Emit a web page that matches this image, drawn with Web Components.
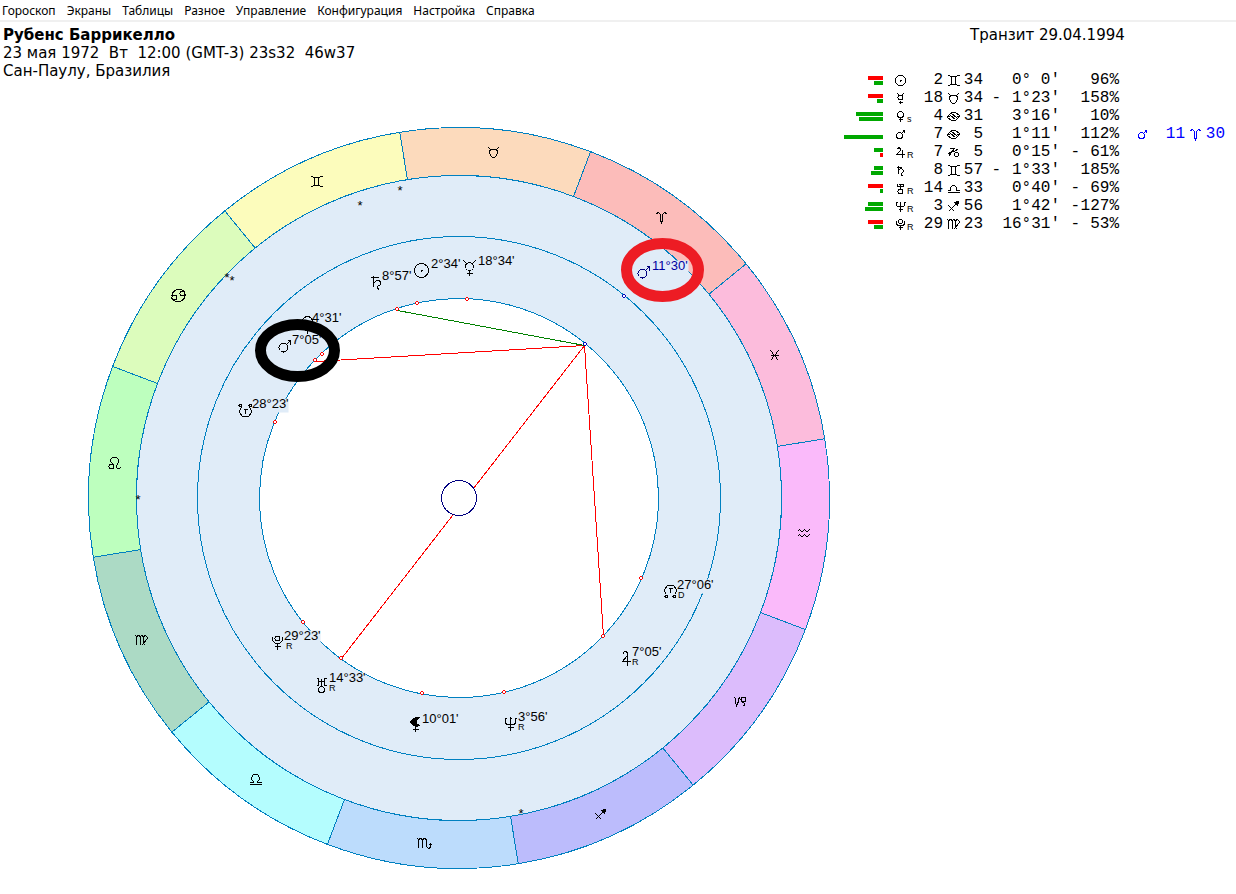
<!DOCTYPE html>
<html lang="ru">
<head>
<meta charset="utf-8">
<title>Рубенс Баррикелло — транзит</title>
<style>
  html, body { margin: 0; background: #fff; color: #000; }
</style>
</head>
<body>
<astro-app>
  <astro-menu slot="menu"></astro-menu>
  <chart-info slot="info">
    <span slot="name">Рубенс Баррикелло</span>
    <span slot="date">23 мая 1972  Вт  12:00 (GMT-3) 23s32  46w37</span>
    <span slot="place">Сан-Паулу, Бразилия</span>
  </chart-info>
  <zodiac-wheel slot="wheel"></zodiac-wheel>
  <span slot="title">Транзит 29.04.1994</span>
  <planet-table slot="table"></planet-table>
</astro-app>

<script>
const GLYPHS = {
  aries: '<path d="M-5-3L-4-5H-3L-1-3V3L0 5L1 3V-3L3-5H4L5-3"/>',
  taurus: '<path d="M-5-5L-3-3H3L5-5M-3-3L-4-1V1L-2 4L-1 5H1L2 4L4 1V-1L3-3"/>',
  gemini: '<path d="M-6-5H-4L-3-4H3L4-5H6M-6 5H-4L-3 4H3L4 5H6M-2-4V4M2-4V4"/>',
  cancer: '<circle cx="-4" cy="2" r="2.5"/><circle cx="4" cy="-2" r="2.5"/><path d="M-7 1Q-6-6 1-6Q5-6 7-3M7-1Q6 6-1 6Q-5 6-7 3"/>',
  cancerAlt: '<path d="M-6 0L-2-4H2L6-1V0L2 4H-2L-6 1ZM-6 1L-3-1L2 3M-2-3L3 1L6-1"/>',
  leo: '<circle cx="-3" cy="3" r="2.5"/><path d="M-1 1L-4-2V-4L-2-6H2L4-4V-1L2 2V4L3 5H5L6 4"/>',
  virgo: '<path d="M-7-4L-6-5L-5-4V4M-5-4L-3-5L-1-4V4M-1-4L0-5L2-4V3L4 5M2-4L4-5L6-3V-2L0 5"/>',
  libra: '<path d="M-6 3H-2V2L-4 0V-2L-2-5H2L4-2V0L2 2V3H6M-6 5H6"/>',
  libraAlt: '<path d="M-6 2H-3V-1L-1-3H1L3-1V2H6M-6 4H6"/>',
  scorpio: '<path d="M-7-5L-6-4V4M-6-4L-4-5L-2-4V4M-2-4L0-5L2-4V3L4 5H5L6 3V0M4 2L6 0L8 2"/>',
  sagittarius: '<path d="M-5 5L4-4M-5-1L1 5"/><path class="solid" d="M5-5L1-4L4-1Z"/>',
  capricorn: '<path d="M-6-4H-5L-4-3V1L-3 4L-1 0V-3L1-4"/><circle cx="4" cy="-2" r="2.5"/><path d="M2-4V0L5 2V4H3"/>',
  capricornAlt: '<path d="M-4-4H1L-5 4M-5 1L-1-1H1L5-4"/><circle cx="3" cy="2" r="2"/>',
  aquarius: '<path d="M-6-2L-4-4L-2-2H-1L1-4L3-2H4L6-4M-6 3L-4 1L-2 3H-1L1 1L3 3H4L6 1"/>',
  pisces: '<path d="M-4-5L-2-3L-1 0L-2 3L-4 5M4-5L2-3L1 0L2 3L4 5M-4 0H4"/>',

  sun: '<circle r="7"/><path class="solid" d="M0-1V1M-1 0H1"/>',
  mercury: '<circle cy="-1" r="4"/><path d="M-6-7L-3-4M6-7L3-4M0 3V8M-3 6H3"/>',
  venus: '<circle cy="-1" r="5"/><path d="M0 4V11M-3 8H3"/>',
  mars: '<circle cx="-1" cy="1" r="4.5"/><path d="M2-2L6-6M3-6H6V-2"/>',
  jupiter: '<path d="M-4-4L-2-7H0L1-5V-3L-4 3H4M1-3V7"/>',
  saturn: '<path d="M-3-7V4M-6-5H2M-3 1L0-2H3L4 0V2L1 4V6L3 7"/>',
  uranus: '<path d="M-5-7H-3V0H-5M5-7H3V0H5M0-7V1M-3-4H3"/><circle cy="4" r="3"/>',
  neptune: '<path d="M-5-6V-1L-4 1H4L5-1V-6M-6-5H-4M4-5H6M0-7V7M-1-5H1M-3 4H3"/>',
  pluto: '<circle cy="-4" r="2.5"/><path d="M-5-6V-2L-2 1H2L5-2V-6M0 1V7M-3 4H3"/>',
  lilith: '<path class="solid" d="M4-6H0L-4-3L-5-1L0 3L4 2L1 0V-3Z"/><path d="M0 3V8M-3 6H3"/>',
  southNode: '<path d="M-4-3L-6 0V2L-3 6H3L6 2V0L4-3M-2-1H2M0-1V3"/><circle cx="-5" cy="-5" r="1.5"/><circle cx="5" cy="-5" r="1.5"/>',
  northNode: '<path d="M-4 3L-6 0V-2L-3-6H3L6-2V0L4 3M-2-3H2M0-3V1"/><circle cx="-4" cy="5" r="1.5"/><circle cx="4" cy="5" r="1.5"/>',

  sunSmall: '<path d="M-2-5H2L5-2V2L2 5H-2L-5 2V-2ZM0-1V1M-1 0H1"/>',
  mercurySmall: '<circle cy="-1" r="2.5"/><path d="M-3-5L-1-3M3-5L1-3M0 2V5M-2 4H2"/>',
  venusSmall: '<circle cy="-2" r="3"/><path d="M0 1V5M-2 3H2"/>',
  marsSmall: '<circle cx="-1" cy="1" r="3"/><path d="M1-1L4-4M2-4H4V-2"/>',
  jupiterSmall: '<path d="M-3-3L-2-5H-1L0-3V-2L-4 2H4M2-3V5"/>',
  saturnSmall: '<path d="M-2-5V3M-4-3H1M-2 0L0-2H1L3 0V1L1 3V5L2 5"/>',
  uranusSmall: '<path d="M-3-5V-2H3V-5M0-5V0M-2-4H2"/><circle cy="3" r="2.5"/>',
  neptuneSmall: '<path d="M-4-4V-1L-3 0H3L4-1V-4M0-5V5M-5-4H-3M3-4H5M-2 3H2"/>',
  plutoSmall: '<circle cy="-3" r="2"/><path d="M-4-4V-1L-3 1H3L4-1V-4M0 1V5M-2 3H2"/>'
};
const GLYPH_CSS = `
  .glyph { fill: none; stroke: currentColor; stroke-width: 1; shape-rendering: crispEdges; }
  .glyph .solid { fill: currentColor; }`;

class AstroApp extends HTMLElement {
  constructor() {
    super();
    this.attachShadow({ mode: 'open' }).innerHTML = `
      <style>
        :host { display: block; }
        main { display: grid; grid-template-columns: minmax(0, 1fr) 392px; padding-top: 4px;
               font: 15px/18px "DejaVu Sans", Verdana, sans-serif; }
        h2 { margin: 0 0 27px 126px; font: inherit; white-space: nowrap; }
      </style>
      <slot name="menu"></slot>
      <main>
        <section><slot name="info"></slot><slot name="wheel"></slot></section>
        <aside><h2><slot name="title"></slot></h2><slot name="table"></slot></aside>
      </main>`;
  }
}

class AstroMenu extends HTMLElement {
  constructor() {
    super();
    const items = ['Гороскоп', 'Экраны', 'Таблицы', 'Разное', 'Управление', 'Конфигурация', 'Настройка', 'Справка'];
    this.attachShadow({ mode: 'open' }).innerHTML = `
      <style>
        :host { display: block; border-bottom: 2px solid #f0f0f0; }
        nav { display: flex; gap: 11px; padding: 2px 2px 0; }
        button { border: 0; padding: 0; margin: 0; background: none; color: #000; white-space: nowrap;
                 font: 12px/18px "Noto Sans", "Segoe UI", sans-serif; }
      </style>
      <nav>${items.map(t => `<button type="button">${t}</button>`).join('')}</nav>`;
  }
}

class ChartInfo extends HTMLElement {
  constructor() {
    super();
    this.attachShadow({ mode: 'open' }).innerHTML = `
      <style>
        :host { display: block; padding-left: 3px; }
        h1, p { margin: 0; font: inherit; white-space: pre; }
        h1 { font-weight: bold; }
      </style>
      <h1><slot name="name"></slot></h1>
      <p><slot name="date"></slot></p>
      <p><slot name="place"></slot></p>`;
  }
}

class ZodiacWheel extends HTMLElement {
  constructor() {
    super();
    const CX = 458.5, CY = 497.5, R = 370.5, RI = 322.5;
    const signs = [
      ['aries', '#fcbcba', 661, 217], ['taurus', '#fcdabc', 493, 152], ['gemini', '#fcfcbc', 316, 181],
      ['cancer', '#dcfcbc', 178, 295], ['leo', '#bdffbe', 114, 463], ['virgo', '#acdac5', 141, 640],
      ['libra', '#b4fdfe', 255, 779], ['scorpio', '#bcdcfc', 424, 843], ['sagittarius', '#bcbcfc', 600, 814],
      ['capricorn', '#dcbcfc', 739, 701], ['aquarius', '#fabafa', 803, 533], ['pisces', '#fcbcdc', 774, 355]
    ];
    const at = (r, deg) => {
      const a = deg * Math.PI / 180;
      return `${(CX + r * Math.cos(a)).toFixed(2)} ${(CY - r * Math.sin(a)).toFixed(2)}`;
    };
    const sectors = signs.map(([, color], i) => {
      const a = 39.2 + 30 * i, b = a + 30;
      return `<path fill="${color}" d="M${at(R, a)}A${R} ${R} 0 0 0 ${at(R, b)}L${at(RI, b)}A${RI} ${RI} 0 0 1 ${at(RI, a)}Z"/>`;
    }).join('');
    const glyph = (name, x, y, color = '#000') =>
      `<g class="glyph" color="${color}" transform="translate(${x} ${y})">${GLYPHS[name]}</g>`;
    // glyph, its x, y, label, label x, baseline, motion mark, mark x, baseline
    const planets = [
      ['saturn', 376, 282, "8°57'", 382, 280],
      ['sun', 421, 270, "2°34'", 431, 268],
      ['mercury', 469, 267, "18°34'", 478, 265],
      ['venus', 307, 322, "4°31'", 312, 322],
      ['mars', 284, 346, "7°05'", 292, 344],
      ['southNode', 245, 410, "28°23'", 252, 408],
      ['pluto', 277, 642, "29°23'", 284, 640, 'R', 286, 649],
      ['uranus', 321, 685, "14°33'", 329, 682, 'R', 329, 691],
      ['lilith', 415, 723, "10°01'", 422, 723],
      ['neptune', 510, 723, "3°56'", 518, 721, 'R', 518, 730],
      ['jupiter', 626, 658, "7°05'", 632, 656, 'R', 632, 665],
      ['northNode', 670, 591, "27°06'", 677, 589, 'D', 678, 598],
      ['mars', 643, 272, "11°30'", 652, 270]
    ];
    const last = planets.length - 1;
    const plates = planets.map(p => `<rect x="${p[4]}" y="${p[5] - 10}" width="${p[3].length * 7 - 6}" height="14"/>`).join('');
    const planetGlyphs = planets.map((p, i) => glyph(p[0], p[1], p[2], i === last ? '#000080' : '#000')).join('');
    const labels = planets.map((p, i) =>
      `<text x="${p[4]}" y="${p[5]}" fill="${i === last ? '#0000a0' : '#000'}">${p[3]}</text>` +
      (p[6] ? `<text class="mark" x="${p[7]}" y="${p[8]}">${p[6]}</text>` : '')).join('');
    const stars = [[400, 195], [360, 210], [227, 282], [232, 285], [138, 504], [521, 818]]
      .map(([x, y]) => `<text class="star" x="${x}" y="${y}">*</text>`).join('');
    const dots = [[397, 309], [417, 303], [467, 299], [322, 354], [315, 360], [275, 422], [303, 622],
      [341, 658], [422, 693], [504, 692], [641, 578], [603, 636]];
    const dot = ([x, y]) => `<path d="M${x - 1} ${y - 2}h1l1 1v1l-1 1h-1l-1-1v-1z"/>`;

    this.attachShadow({ mode: 'open' }).innerHTML = `
      <style>
        :host { display: block; padding: 47px 14px 0 88px; }
        svg { display: block; width: 100%; height: auto; }
        .lines { fill: none; stroke: #0080c0; shape-rendering: crispEdges; }
        .lines .band { fill: #e0ecf8; }
        .lines .core { fill: #fff; }
        .aspects { fill: none; stroke: red; shape-rendering: crispEdges; }
        .dots { fill: #fff; stroke: red; shape-rendering: crispEdges; }
        .blue { stroke: #0000c0; }
        .plates { fill: #e0ecf8; }
        text { font: 13px "Liberation Sans", Arial, sans-serif; }
        .mark { font-size: 9px; }
        .star { text-anchor: middle; }
        ${GLYPH_CSS}
      </style>
      <svg viewBox="88 127 742 742" role="img" aria-label="Карта гороскопа">
        <g transform="translate(.5 .5)">
          <g class="lines">${sectors}
            <circle class="band" cx="${CX}" cy="${CY}" r="${RI}"/>
            <circle cx="${CX}" cy="${CY}" r="261.5"/>
            <circle class="core" cx="${CX}" cy="${CY}" r="199.5"/>
          </g>
          <g class="aspects">
            <path d="M584 345L315 361M584 345L603 636M584 345L341 658"/>
            <path stroke="#008000" d="M584 345L397 310"/>
            <circle cx="${CX}" cy="${CY}" r="17.5" fill="#fff" stroke="#000080"/>
          </g>
          <g class="plates">${plates}</g>
          <g class="dots">${dots.map(dot).join('')}<g class="blue">${dot([624, 296])}${dot([585, 344])}</g></g>
          ${signs.map(([n, , x, y]) => glyph(n, x, y)).join('')}
          ${planetGlyphs}
        </g>
        ${labels}
        ${stars}
        <g fill="none" stroke-width="11">
          <ellipse cx="297.5" cy="350.5" rx="37" ry="26" stroke="#000"/>
          <ellipse cx="662.5" cy="270" rx="36" ry="26.5" stroke="#ed1c24"/>
        </g>
      </svg>`;
  }
}

class AstroGlyph extends HTMLElement {
  connectedCallback() {
    if (this.shadowRoot) return;
    this.attachShadow({ mode: 'open' }).innerHTML = `
      <style>
        :host { display: block; white-space: normal; }
        svg { display: block; margin: auto; }
        ${GLYPH_CSS}
      </style>
      <svg width="18" height="18" viewBox="-9.5 -9.5 18 18" aria-hidden="true"><g class="glyph">${GLYPHS[this.getAttribute('name')]}</g></svg>`;
  }
}

class ScoreBars extends HTMLElement {
  connectedCallback() {
    if (this.shadowRoot) return;
    const bars = this.getAttribute('values').split(',').map(Number);
    this.attachShadow({ mode: 'open' }).innerHTML = `
      <style>
        :host { display: flex; flex-direction: column; align-items: flex-end; gap: 1px; }
        i { display: block; height: 4px; background: #00a800; }
        .neg { background: red; }
      </style>${bars.map(v => `<i class="${v < 0 ? 'neg' : ''}" style="width:${Math.abs(v)}px"></i>`).join('')}`;
  }
}

class PlanetTable extends HTMLElement {
  constructor() {
    super();
    // bars, planet, mark, degree, sign, minutes, speed sign, speed, percent sign, percent
    const rows = [
      ['-15,9', 'sun', '', '2', 'gemini', '34', '', "0° 0'", '', '96%'],
      ['-15,6', 'mercury', '', '18', 'taurus', '34', '-', "1°23'", '', '158%'],
      ['27,24', 'venus', 's', '4', 'cancerAlt', '31', '', "3°16'", '', '10%'],
      ['0,39', 'mars', '', '7', 'cancerAlt', '5', '', "1°11'", '', '112%'],
      ['9,-3', 'jupiter', 'R', '7', 'capricornAlt', '5', '', "0°15'", '-', '61%'],
      ['9,12', 'saturn', '', '8', 'gemini', '57', '-', "1°33'", '', '185%'],
      ['-15,3', 'uranus', 'R', '14', 'libraAlt', '33', '', "0°40'", '-', '69%'],
      ['15,18', 'neptune', 'R', '3', 'sagittarius', '56', '', "1°42'", '-', '127%'],
      ['-15,9', 'pluto', 'R', '29', 'virgo', '23', '', "16°31'", '-', '53%']
    ];
    const transit = { 3: ['marsSmall', '11', 'aries', '30'] };
    const widths = [39, 31, 29, 20, 20, 18, 59, 20, 39, 46, 20, 20, 20];
    const g = n => `<astro-glyph name="${n}"></astro-glyph>`;
    this.attachShadow({ mode: 'open' }).innerHTML = `
      <style>
        :host { display: block; }
        table { table-layout: fixed; width: 381px; border-collapse: collapse;
                font: 16px/18px "Liberation Mono", "Courier New", monospace; }
        td { height: 18px; padding: 0; text-align: right; white-space: nowrap; vertical-align: middle; }
        .planet { display: flex; padding-left: 8px; height: 18px; }
        .planet small { width: 6px; margin-left: -2px; text-align: left;
                        font: 9px/12px "Liberation Sans", Arial, sans-serif; align-self: flex-end; }
        .transit { color: #0000ff; }
      </style>
      <table aria-label="Положения планет">
        <colgroup>${widths.map(w => `<col style="width:${w}px">`).join('')}</colgroup>
        <tbody>${rows.map((r, i) => {
          const t = transit[i];
          return `<tr><td><score-bars values="${r[0]}"></score-bars></td>` +
            `<td><div class="planet">${g(r[1] + 'Small')}<small>${r[2]}</small></div></td>` +
            `<td>${r[3]}</td><td>${g(r[4])}</td><td>${r[5]}</td><td>${r[6]}</td><td>${r[7]}</td><td>${r[8]}</td><td>${r[9]}</td>` +
            (t ? `<td class="transit">${g(t[0])}</td><td class="transit">${t[1]}</td><td class="transit">${g(t[2])}</td><td class="transit">${t[3]}</td>`
               : '<td></td><td></td><td></td><td></td>') + '</tr>';
        }).join('')}</tbody>
      </table>`;
  }
}

customElements.define('astro-glyph', AstroGlyph);
customElements.define('score-bars', ScoreBars);
customElements.define('astro-menu', AstroMenu);
customElements.define('chart-info', ChartInfo);
customElements.define('zodiac-wheel', ZodiacWheel);
customElements.define('planet-table', PlanetTable);
customElements.define('astro-app', AstroApp);
</script>
</body>
</html>
